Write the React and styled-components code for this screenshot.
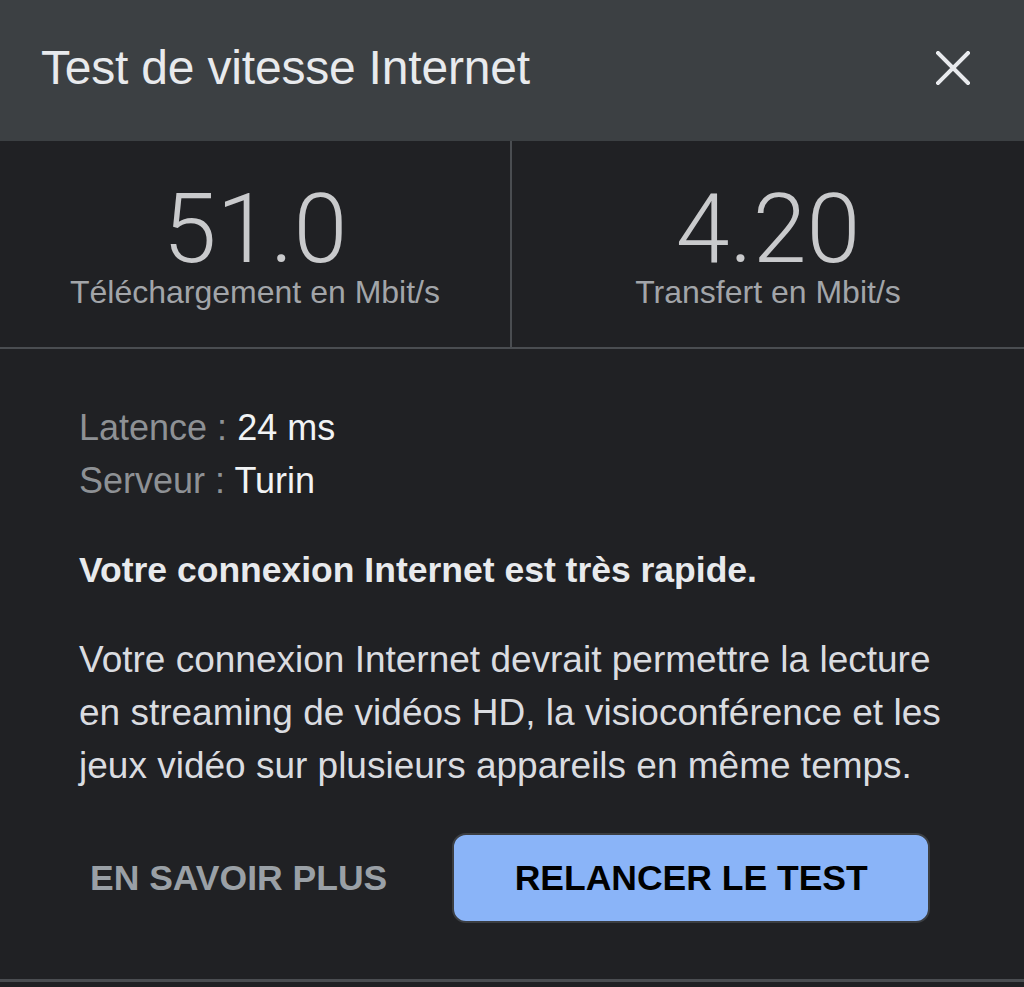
import React from 'react';
import styled, { createGlobalStyle } from 'styled-components';

const GlobalStyle = createGlobalStyle`
  html, body {
    margin: 0;
    padding: 0;
    background: #202124;
  }
  body {
    font-family: "Liberation Sans", Arial, sans-serif;
    -webkit-font-smoothing: antialiased;
  }
`;

const Panel = styled.div`
  width: 1024px;
  min-height: 987px;
  background: #202124;
  color: #e8eaed;
`;

const Header = styled.header`
  height: 141px;
  background: #3c4043;
  display: flex;
  align-items: center;
  justify-content: space-between;
  padding: 0 54px 6px 41px;
  box-sizing: border-box;
`;

const Title = styled.h1`
  margin: 0;
  font-size: 48px;
  font-weight: normal;
  color: #e8eaed;
  letter-spacing: -0.2px;
`;

const CloseButton = styled.button`
  width: 34px;
  height: 34px;
  padding: 0;
  border: none;
  background: transparent;
  display: flex;
  cursor: pointer;
`;

const Stats = styled.div`
  display: grid;
  grid-template-columns: 1fr 1fr;
  height: 208px;
  border-bottom: 2px solid #4a4d51;
  box-sizing: border-box;
`;

const Stat = styled.div`
  display: flex;
  flex-direction: column;
  align-items: center;
  justify-content: center;
  padding-top: 8px;
  border-right: ${p => (p.divider ? '2px solid #4a4d51' : 'none')};
`;

const Value = styled.div`
  font-family: Roboto, "Liberation Sans", sans-serif;
  font-weight: 300;
  font-size: 97px;
  line-height: 88px;
  color: #c9cacc;
`;

const Unit = styled.div`
  font-size: 32px;
  line-height: 38px;
  color: #a2a5a9;
`;

const Body = styled.section`
  padding: 52px 79px 56px;
  border-bottom: 3px solid #4a4d51;
`;

const InfoLine = styled.div`
  font-size: 36px;
  line-height: 53px;
  color: #f1f3f4;
`;

const InfoLabel = styled.span`
  color: #8e9195;
`;

const Headline = styled.p`
  margin: 37px 0 0;
  font-size: 35.5px;
  line-height: 53px;
  font-weight: bold;
  color: #e8eaed;
`;

const Paragraph = styled.p`
  margin: 36px 0 0;
  font-size: 37px;
  line-height: 53px;
  color: #dadce0;
`;

const Actions = styled.div`
  display: flex;
  align-items: center;
  gap: 54px;
  margin-top: 41px;
`;

const TextButton = styled.button`
  border: none;
  background: transparent;
  padding: 0 11px;
  font-family: inherit;
  font-size: 35.5px;
  font-weight: bold;
  color: #9aa0a6;
  cursor: pointer;
`;

const PrimaryButton = styled.button`
  width: 478px;
  height: 90px;
  border-radius: 14px;
  border: 2px solid #3b3e42;
  background: #8ab4f8;
  font-family: inherit;
  font-size: 35.5px;
  font-weight: bold;
  color: #000;
  cursor: pointer;
`;

const CloseIcon = () => (
  <svg width="34" height="34" viewBox="0 0 34 34">
    <path d="M2 2 L32 32 M32 2 L2 32" stroke="#e8eaed" strokeWidth="4" strokeLinecap="square" fill="none" />
  </svg>
);

export default function App() {
  return (
    <Panel>
      <GlobalStyle />
      <Header>
        <Title>Test de vitesse Internet</Title>
        <CloseButton aria-label="Fermer">
          <CloseIcon />
        </CloseButton>
      </Header>
      <Stats>
        <Stat divider>
          <Value>51.0</Value>
          <Unit>Téléchargement en Mbit/s</Unit>
        </Stat>
        <Stat>
          <Value>4.20</Value>
          <Unit>Transfert en Mbit/s</Unit>
        </Stat>
      </Stats>
      <Body>
        <InfoLine>
          <InfoLabel>Latence : </InfoLabel>24 ms
        </InfoLine>
        <InfoLine>
          <InfoLabel>Serveur : </InfoLabel>Turin
        </InfoLine>
        <Headline>Votre connexion Internet est très rapide.</Headline>
        <Paragraph>
          Votre connexion Internet devrait permettre la lecture en streaming de vidéos HD, la visioconférence et les
          jeux vidéo sur plusieurs appareils en même temps.
        </Paragraph>
        <Actions>
          <TextButton>EN SAVOIR PLUS</TextButton>
          <PrimaryButton>RELANCER LE TEST</PrimaryButton>
        </Actions>
      </Body>
    </Panel>
  );
}
